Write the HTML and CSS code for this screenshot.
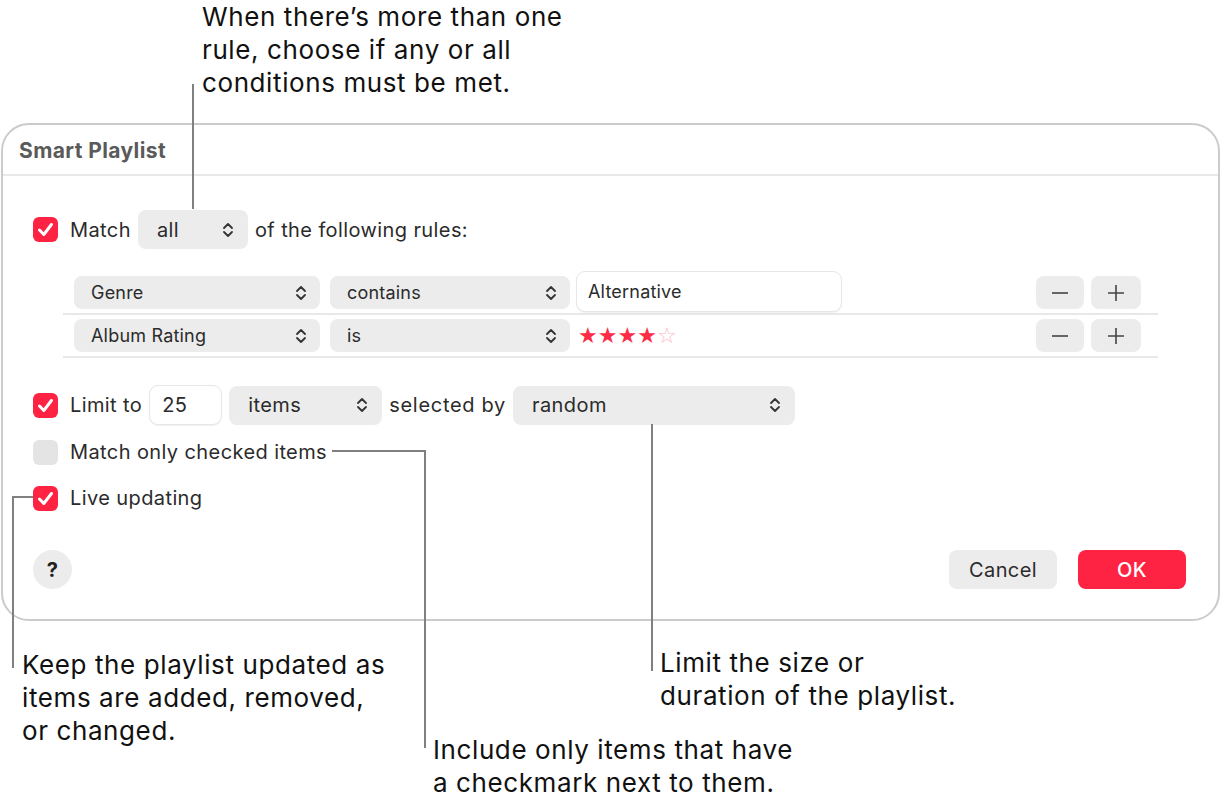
FILE: index.html
```html
<!DOCTYPE html>
<html lang="en">
<head>
  <meta charset="UTF-8">
  <meta name="viewport" content="width=device-width, initial-scale=1.0">
  <title>Smart Playlist</title>
  <link rel="stylesheet" href="styles.css">
</head>
<body>
  <div class="page">
    <p class="note note-top">When there’s more than one<br>rule, choose if any or all<br>conditions must be met.</p>

    <div class="window">
      <div class="title">Smart Playlist</div>
      <div class="content">
        <div class="row match-row">
          <span class="check on"><svg viewBox="0 0 25 25"><path d="M6.5 13 L10.8 17.5 L18.5 7.5"/></svg></span>
          <span class="label">Match</span>
          <span class="popup popup-all">all<svg class="chev" viewBox="0 0 12 18"><path d="M2 7 L6 3 L10 7 M2 11 L6 15 L10 11"/></svg></span>
          <span class="label">of the following rules:</span>
        </div>

        <div class="rules">
          <div class="rule">
            <span class="popup popup-sm popup-field">Genre<svg class="chev" viewBox="0 0 12 18"><path d="M2 7 L6 3 L10 7 M2 11 L6 15 L10 11"/></svg></span>
            <span class="popup popup-sm popup-op">contains<svg class="chev" viewBox="0 0 12 18"><path d="M2 7 L6 3 L10 7 M2 11 L6 15 L10 11"/></svg></span>
            <span class="textfield rule-value">Alternative</span>
            <span class="spacer"></span>
            <span class="step minus"><svg viewBox="0 0 18 18"><path d="M1 9 H17"/></svg></span>
            <span class="step plus"><svg viewBox="0 0 18 18"><path d="M1 9 H17 M9 1 V17"/></svg></span>
          </div>
          <div class="rule">
            <span class="popup popup-sm popup-field">Album Rating<svg class="chev" viewBox="0 0 12 18"><path d="M2 7 L6 3 L10 7 M2 11 L6 15 L10 11"/></svg></span>
            <span class="popup popup-sm popup-op">is<svg class="chev" viewBox="0 0 12 18"><path d="M2 7 L6 3 L10 7 M2 11 L6 15 L10 11"/></svg></span>
            <span class="stars">★★★★<span class="star-off">☆</span></span>
            <span class="spacer"></span>
            <span class="step minus"><svg viewBox="0 0 18 18"><path d="M1 9 H17"/></svg></span>
            <span class="step plus"><svg viewBox="0 0 18 18"><path d="M1 9 H17 M9 1 V17"/></svg></span>
          </div>
        </div>

        <div class="row limit-row">
          <span class="check on"><svg viewBox="0 0 25 25"><path d="M6.5 13 L10.8 17.5 L18.5 7.5"/></svg></span>
          <span class="label">Limit to</span>
          <span class="textfield limit-num">25</span>
          <span class="popup popup-items">items<svg class="chev" viewBox="0 0 12 18"><path d="M2 7 L6 3 L10 7 M2 11 L6 15 L10 11"/></svg></span>
          <span class="label label-wide">selected by</span>
          <span class="popup popup-random">random<svg class="chev" viewBox="0 0 12 18"><path d="M2 7 L6 3 L10 7 M2 11 L6 15 L10 11"/></svg></span>
        </div>

        <div class="row option-row">
          <span class="check"></span>
          <span class="label">Match only checked items</span>
        </div>

        <div class="row option-row">
          <span class="check on"><svg viewBox="0 0 25 25"><path d="M6.5 13 L10.8 17.5 L18.5 7.5"/></svg></span>
          <span class="label">Live updating</span>
        </div>

        <div class="footer">
          <span class="help">?</span>
          <span class="spacer"></span>
          <button class="btn">Cancel</button>
          <button class="btn btn-ok">OK</button>
        </div>
      </div>
    </div>

    <p class="note note-live">Keep the playlist updated as<br>items are added, removed,<br>or changed.</p>
    <p class="note note-limit">Limit the size or<br>duration of the playlist.</p>
    <p class="note note-checked">Include only items that have<br>a checkmark next to them.</p>

    <!-- callout leader lines -->
    <div class="leader v" style="left: 192px; top: 84px; height: 125px;"></div>
    <div class="leader h" style="left: 332px; top: 450px; width: 94px;"></div>
    <div class="leader v" style="left: 424px; top: 450px; height: 298px;"></div>
    <div class="leader v" style="left: 651px; top: 424px; height: 247px;"></div>
    <div class="leader h" style="left: 12px; top: 496px; width: 21px;"></div>
    <div class="leader v" style="left: 12px; top: 496px; height: 172px;"></div>
  </div>
</body>
</html>
```

FILE: styles.css
```css
body {
  margin: 0;
  font-family: Inter, "Noto Sans", sans-serif;
  background: #fff;
  color: #000;
}
.page {
  position: relative;
  width: 1224px;
  height: 802px;
  overflow: hidden;
}
.note {
  margin: 0;
  font-size: 26px;
  letter-spacing: 0.6px;
  line-height: 33px;
  color: #111;
  white-space: nowrap;
}
.note-top {
  padding: 0 0 0 202px;
  height: 99px;
}
.note-live {
  position: absolute;
  left: 22px;
  top: 648px;
}
.note-limit {
  position: absolute;
  left: 660px;
  top: 646px;
}
.note-checked {
  position: absolute;
  left: 433px;
  top: 733px;
}
.leader {
  position: absolute;
  background: #808080;
}
.leader.v { width: 2px; }
.leader.h { height: 2px; }

.window {
  margin: 24px 0 0 1px;
  width: 1215px;
  border: 2px solid #cbcbcb;
  border-radius: 28px;
  background: #fff;
  color: #2b2b2b;
  font-size: 20px;
  letter-spacing: 0.4px;
}
.title {
  height: 49px;
  line-height: 51px;
  padding-left: 16px;
  font-weight: 700;
  color: #5a5a5a;
  border-bottom: 2px solid #e8e8e8;
  font-size: 21px;
  letter-spacing: 0.4px;
}
.content {
  padding: 34px 30px 30px 30px;
}
.row {
  display: flex;
  align-items: center;
}
.match-row {
  height: 39px;
}
.label {
  margin-right: 7px;
  white-space: nowrap;
}
.label-wide {
  letter-spacing: 0.7px;
}
.check {
  width: 25px;
  height: 25px;
  border-radius: 6px;
  background: #e4e4e4;
  margin-right: 12px;
  flex: none;
  display: flex;
}
.check.on {
  background: #fe2342;
}
.check svg {
  width: 25px;
  height: 25px;
  fill: none;
  stroke: #fff;
  stroke-width: 3;
  stroke-linecap: round;
  stroke-linejoin: round;
}
.popup {
  display: flex;
  align-items: center;
  justify-content: space-between;
  box-sizing: border-box;
  height: 39px;
  padding: 0 14px 0 19px;
  background: #ececec;
  border-radius: 8px;
  margin-right: 7px;
  flex: none;
}
.chev {
  width: 12px;
  height: 18px;
  fill: none;
  stroke: #333;
  stroke-width: 1.8;
  stroke-linecap: round;
  stroke-linejoin: round;
}
.popup-all { width: 110px; }
.popup-items { width: 153px; }
.popup-random { width: 282px; }

.rules {
  margin: 23px 30px 0 30px;
}
.rule {
  display: flex;
  align-items: center;
  height: 41px;
  padding: 0 17px 0 11px;
  border-bottom: 2px solid #e8e8e8;
  font-size: 18px;
  letter-spacing: 0.2px;
}
.popup-sm {
  height: 33px;
  padding: 0 13px 0 17px;
}
.popup-field {
  width: 246px;
  margin-right: 10px;
}
.popup-op {
  width: 240px;
  margin-right: 6px;
}
.textfield {
  box-sizing: border-box;
  display: flex;
  align-items: center;
  border: 1px solid #e6e6e6;
  border-radius: 9px;
  background: #fff;
  box-shadow: 0 1px 1px rgba(0, 0, 0, 0.06);
}
.rule-value {
  width: 266px;
  height: 41px;
  padding-left: 11px;
  margin-top: -2px;
}
.stars {
  margin-left: 2px;
  color: #fe2d46;
  font-family: "DejaVu Sans", sans-serif;
  font-size: 22px;
  letter-spacing: 0;
}
.star-off {
  color: #ffb8c2;
}
.spacer {
  flex: 1;
}
.step {
  width: 48px;
  height: 33px;
  border-radius: 8px;
  background: #ececec;
  display: flex;
  align-items: center;
  justify-content: center;
}
.step.plus {
  width: 50px;
  margin-left: 7px;
}
.step svg {
  width: 18px;
  height: 18px;
  fill: none;
  stroke: #444;
  stroke-width: 1.6;
}

.limit-row {
  margin-top: 27px;
  height: 40px;
}
.limit-num {
  width: 73px;
  height: 40px;
  padding-left: 12px;
  margin-right: 7px;
}
.option-row {
  height: 46px;
}
.limit-row + .option-row {
  margin-top: 4px;
}

.footer {
  display: flex;
  align-items: center;
  margin-top: 29px;
  height: 39px;
}
.help {
  width: 39px;
  height: 39px;
  border-radius: 50%;
  background: #ececec;
  display: flex;
  align-items: center;
  justify-content: center;
  font-weight: 700;
  font-size: 20px;
  color: #222;
}
.btn {
  font-family: inherit;
  font-size: 20px;
  letter-spacing: 0.4px;
  height: 39px;
  width: 108px;
  border: none;
  border-radius: 8px;
  background: #ececec;
  color: #2b2b2b;
  padding: 0;
}
.btn-ok {
  margin-left: 21px;
  margin-right: 2px;
  background: #fe2342;
  color: #fff;
  font-weight: 500;
}
```
